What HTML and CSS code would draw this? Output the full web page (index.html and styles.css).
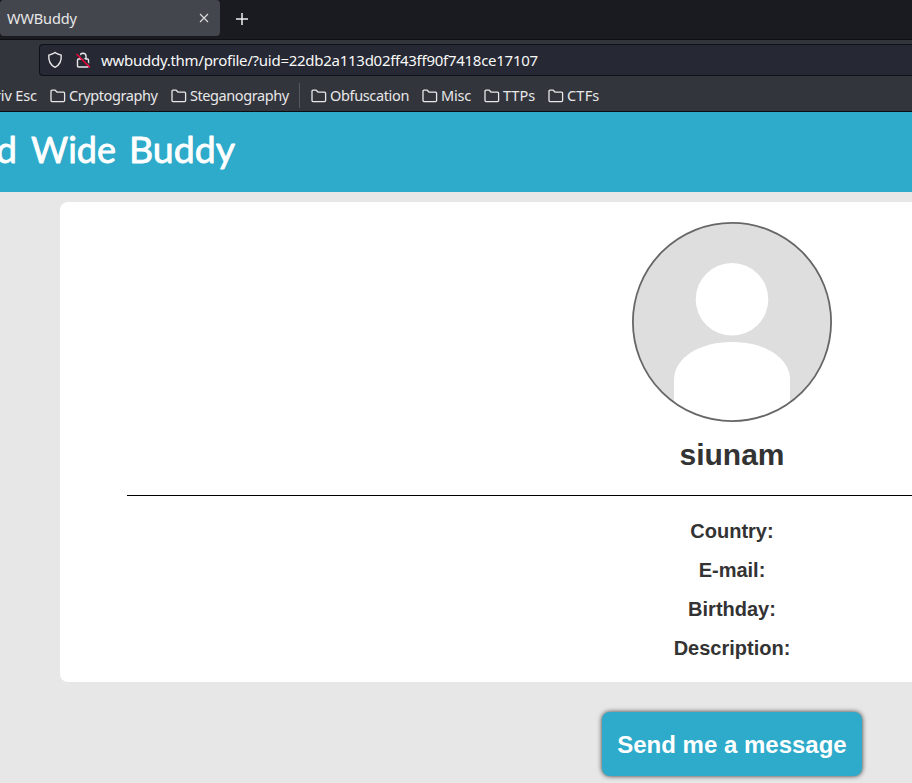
FILE: index.html
```html
<!DOCTYPE html>
<html lang="en">
<head>
<meta charset="utf-8">
<title>WWBuddy</title>
<link rel="stylesheet" href="styles.css">
</head>
<body>
<svg class="defs" width="0" height="0"><symbol id="folder" viewBox="0 0 16 14"><path d="M1 2.3Q1 1.2 2.1 1.2H5.2L7.2 3.2H13.6Q14.6 3.2 14.6 4.2V11.6Q14.6 12.6 13.6 12.6H2Q1 12.6 1 11.6Z" fill="none" stroke="#e8e8e8" stroke-width="1.3" stroke-linejoin="round"/></symbol></svg>
<div class="tabs">
  <div class="tab"><span class="tab-title">WWBuddy</span><svg class="close" viewBox="0 0 10 10"><path d="M1 1l8 8M9 1l-8 8"/></svg></div>
  <svg class="plus" viewBox="0 0 12 12"><path d="M6 0v12M0 6h12"/></svg>
</div>
<div class="toolbar">
  <div class="url">
    <svg class="shield" viewBox="0 0 16 18"><path d="M8 1.5Q9 2.5 14.2 4.2C14.6 9 13.2 13.7 8 16.3C2.8 13.7 1.4 9 1.8 4.2Q7 2.5 8 1.5Z"/></svg>
    <svg class="lock" viewBox="0 0 16 18"><path d="M5 8V5.2a3 3 0 0 1 6 0V8M3.5 8h9q1 0 1 1v6q0 1-1 1h-9q-1 0-1-1V9q0-1 1-1Z"/><path class="gap" d="M2.5 2L16 15.5"/><path class="slash" d="M1.5 3L15 16.5"/></svg>
    <span class="address">wwbuddy.thm/profile/?uid=22db2a113d02ff43ff90f7418ce17107</span>
  </div>
</div>
<div class="bookmarks">
  <span class="bm first">riv Esc</span>
  <span class="bm crypto"><svg><use href="#folder"/></svg>Cryptography</span>
  <span class="bm steg"><svg><use href="#folder"/></svg>Steganography</span>
  <span class="divider"></span>
  <span class="bm obf"><svg><use href="#folder"/></svg>Obfuscation</span>
  <span class="bm misc"><svg><use href="#folder"/></svg>Misc</span>
  <span class="bm ttps"><svg><use href="#folder"/></svg>TTPs</span>
  <span class="bm ctfs"><svg><use href="#folder"/></svg>CTFs</span>
</div>
<header class="brand">
  <svg class="brand-name" viewBox="0 0 300 80">
    <text x="-4" y="51" textLength="21" lengthAdjust="spacingAndGlyphs">d</text>
    <text x="31" y="51" textLength="85" lengthAdjust="spacingAndGlyphs">Wide</text>
    <text x="129" y="51" textLength="106" lengthAdjust="spacingAndGlyphs">Buddy</text>
  </svg>
</header>
<main class="page">
  <section class="card">
    <svg class="avatar" viewBox="0 0 200 200">
      <defs><clipPath id="round"><circle cx="100" cy="100" r="99"/></clipPath></defs>
      <g clip-path="url(#round)"><rect width="200" height="200" fill="#dedede"/><circle cx="100" cy="77.3" r="36.3" fill="#fff"/><path d="M42 200V158C42 136 67 120 100 120S158 136 158 158V200Z" fill="#fff"/></g>
      <circle cx="100" cy="100" r="99.1" fill="none" stroke="#666" stroke-width="1.8"/>
    </svg>
    <h1>siunam</h1>
    <hr>
    <div class="fields">
      <p class="country">Country:</p>
      <p class="email">E-mail:</p>
      <p class="birthday">Birthday:</p>
      <p class="description">Description:</p>
    </div>
  </section>
  <a class="message">Send me a message</a>
</main>
</body>
</html>
```
FILE: styles.css
```css
* { box-sizing: border-box; }
html, body { margin: 0; width: 100%; height: 783px; overflow: hidden; }
body { background: #e7e7e7; font-family: "Noto Sans", sans-serif; font-size: 14.5px; }
.defs { position: absolute; }
.tabs { height: 40px; background: #1a1b20; border-bottom: 1px solid #0e0f13; display: flex; align-items: flex-start; }
.tab { width: 220px; height: 36px; background: #44464e; border-radius: 4px; padding: 0 11px 0 7px; display: flex; align-items: center; justify-content: space-between; color: #e8e8e8; }
.tab-title { line-height: 36px; padding-bottom: 1px; letter-spacing: -0.1px; }
.close { width: 10px; height: 10px; stroke: #ddd; stroke-width: 1.1; fill: none; }
.plus { width: 12px; height: 12px; margin: 13px 0 0 16px; stroke: #f0f0f0; stroke-width: 1.5; }
.toolbar { height: 40px; background: #33353d; padding: 4px 0 0 39px; overflow: hidden; }
.url { width: 100%; height: 32px; background: #262833; border: 1px solid #101116; border-right: 0; border-radius: 4px 0 0 4px; display: flex; align-items: center; padding-left: 7px; }
.url svg { width: 16px; height: 18px; fill: none; stroke: #e8e8e8; stroke-width: 1.4; flex: none; }
.lock { margin-left: 12px; }
.url svg .gap { stroke: #262833; stroke-width: 1.3; }
.url svg .slash { stroke: #ef0038; stroke-width: 1.5; }
.address { margin-left: 10px; color: #f8f8f8; font-size: 15px; letter-spacing: -0.27px; white-space: nowrap; }
.bookmarks { height: 32px; background: #33353d; border-bottom: 1px solid #0d0e12; display: flex; align-items: center; color: #e8e8e8; white-space: nowrap; letter-spacing: -0.42px; overflow: hidden; }
.bm { display: flex; align-items: center; flex: none; padding-bottom: 2px; }
.bm svg { width: 16px; height: 14px; margin: 2px 3px 0 0; flex: none; }
.first { width: 49px; margin-left: -5px; margin-right: 6px; letter-spacing: -0.15px; }
.crypto { width: 121px; }
.steg { width: 128px; }
.divider { width: 1px; height: 25px; background: #565860; margin-right: 11px; }
.obf { width: 111px; letter-spacing: -0.36px; }
.misc { width: 62px; letter-spacing: -0.2px; }
.ttps { width: 64px; letter-spacing: 0; }
.ctfs { letter-spacing: 0.2px; }
.brand { height: 80px; background: #2eaaca; overflow: hidden; }
.brand-name { display: block; width: 300px; height: 80px; }
.brand-name text { font-family: Lato, sans-serif; font-size: 36px; fill: #fff; stroke: #fff; stroke-width: .8; stroke-linejoin: round; }
.page { width: 1344px; margin-left: 60px; padding-top: 10px; display: flex; flex-direction: column; align-items: center; font-family: "Liberation Sans", Arial, sans-serif; }
.card { width: 100%; height: 480px; background: #fff; border-radius: 8px; padding-top: 20px; display: flex; flex-direction: column; align-items: center; color: #333; }
.avatar { width: 200px; height: 200px; display: block; }
h1 { font-size: 30px; line-height: 34px; margin: 16px 0 0; }
hr { width: 1210px; height: 1px; border: 0; background: #000; margin: 23px 0 0; }
.fields { margin-top: 16px; text-align: center; font-size: 20px; font-weight: bold; }
.fields p { margin: 0; line-height: 39px; }
.message { width: 260px; height: 64px; margin-top: 30px; background: #2eaaca; border-radius: 8px; box-shadow: 0 0 5px #333; color: #fff; font-size: 24px; font-weight: bold; line-height: 65px; text-align: center; white-space: nowrap; }
```
